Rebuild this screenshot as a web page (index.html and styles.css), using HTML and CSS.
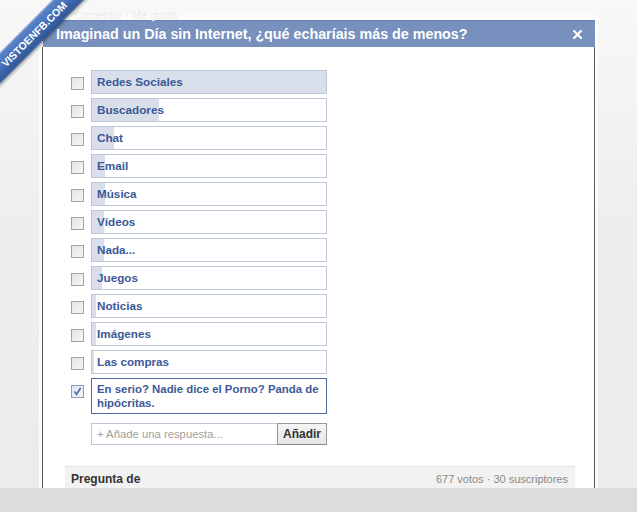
FILE: index.html
```html
<!DOCTYPE html>
<html lang="es">
<head>
<meta charset="utf-8">
<title>Imaginad un Día sin Internet</title>
<link rel="stylesheet" href="styles.css">
</head>
<body>
<div class="stage">
  <div class="ghost">Comentar · Me gusta</div>
  <div class="frame">
    <div class="dialog">
      <div class="head">
        <span class="title">Imaginad un Día sin Internet, ¿qué echaríais más de menos?</span>
        <svg class="close" width="9" height="9" viewBox="0 0 9 9"><path d="M1 1L8 8M8 1L1 8" stroke="#fff" stroke-width="2.2" stroke-linecap="square"/></svg>
      </div>
      <div class="body">
        <div class="options">
          <div class="row"><span class="cb"></span><div class="opt"><div class="bar" style="width:100%"></div><span class="lbl">Redes Sociales</span></div></div>
          <div class="row"><span class="cb"></span><div class="opt"><div class="bar" style="width:67px"></div><span class="lbl">Buscadores</span></div></div>
          <div class="row"><span class="cb"></span><div class="opt"><div class="bar" style="width:22px"></div><span class="lbl">Chat</span></div></div>
          <div class="row"><span class="cb"></span><div class="opt"><div class="bar" style="width:13px"></div><span class="lbl">Email</span></div></div>
          <div class="row"><span class="cb"></span><div class="opt"><div class="bar" style="width:13px"></div><span class="lbl">Música</span></div></div>
          <div class="row"><span class="cb"></span><div class="opt"><div class="bar" style="width:12px"></div><span class="lbl">Vídeos</span></div></div>
          <div class="row"><span class="cb"></span><div class="opt"><div class="bar" style="width:12px"></div><span class="lbl">Nada...</span></div></div>
          <div class="row"><span class="cb"></span><div class="opt"><div class="bar" style="width:10px"></div><span class="lbl">Juegos</span></div></div>
          <div class="row"><span class="cb"></span><div class="opt"><div class="bar" style="width:4px"></div><span class="lbl">Noticias</span></div></div>
          <div class="row"><span class="cb"></span><div class="opt"><div class="bar" style="width:4px"></div><span class="lbl">Imágenes</span></div></div>
          <div class="row"><span class="cb"></span><div class="opt"><div class="bar" style="width:2px"></div><span class="lbl">Las compras</span></div></div>
          <div class="row"><span class="cb checked"><svg width="11" height="11" viewBox="0 0 11 11"><path d="M2.5 5.5L4.6 8.3L8.6 2" fill="none" stroke="#4f6aa3" stroke-width="1.6"/></svg></span><div class="opt sel"><span class="lbl">En serio? Nadie dice el Porno? Panda de hipócritas.</span></div></div>
        </div>
        <div class="add">
          <div class="field">+ Añade una respuesta...</div>
          <div class="btn">Añadir</div>
        </div>
        <div class="foot">
          <span class="by">Pregunta de</span>
          <span class="stats">677 votos · 30 suscriptores</span>
        </div>
      </div>
    </div>
  </div>
  <div class="ribbon"><span class="rtext">VISTOENFB.COM</span></div>
</div>
<div class="band"></div>
</body>
</html>
```

FILE: styles.css
```css
html, body {
  margin: 0;
  padding: 0;
}
body {
  width: 637px;
  height: 512px;
  overflow: hidden;
  font-family: "Liberation Sans", Arial, sans-serif;
  background: #dcdcdc;
}
.stage {
  position: relative;
  height: 488px;
  overflow: hidden;
  padding-top: 15px;
  box-sizing: border-box;
  background: linear-gradient(to bottom, #f8f8f8 0%, #eeeeee 45%, #ececec 100%);
}
.ghost {
  position: absolute;
  left: 74px;
  top: 9px;
  font-size: 11px;
  color: #ebebeb;
}
.frame {
  margin-left: 39px;
  width: 559px;
  box-sizing: border-box;
  padding: 5px 3px 0 3px;
  background: rgba(255, 255, 255, 0.75);
  height: 500px;
}
.dialog {
  height: 100%;
  display: flex;
  flex-direction: column;
}
.head {
  height: 27px;
  box-sizing: border-box;
  background: #7790bd;
  border-top: 1px solid #6880b0;
  display: flex;
  align-items: center;
  justify-content: space-between;
  padding: 0 13px 0 13px;
  margin-left: 1px;
}
.title {
  color: #fff;
  font-weight: bold;
  font-size: 14.3px;
  white-space: nowrap;
}
.close {
  display: block;
}
.body {
  flex: 1;
  background: #fff;
  border-left: 1px solid #5a5a5a;
  border-right: 1px solid #5a5a5a;
  padding: 23px 19px 0 22px;
}
.options {
  display: flex;
  flex-direction: column;
  gap: 4px;
  padding-left: 6px;
}
.row {
  display: flex;
  align-items: flex-start;
  gap: 7px;
}
.cb {
  width: 13px;
  height: 13px;
  box-sizing: border-box;
  margin-top: 7px;
  border: 1px solid #a3a3a3;
  background: linear-gradient(135deg, #e4e4e4 0%, #f6f6f6 100%);
  display: flex;
  align-items: center;
  justify-content: center;
  flex: none;
}
.cb.checked {
  border-color: #8e9bb5;
  background: linear-gradient(135deg, #dfe4ee 0%, #f4f6fa 100%);
}
.opt {
  position: relative;
  width: 236px;
  height: 24px;
  box-sizing: border-box;
  border: 1px solid #bdc7d8;
  background: #fff;
  overflow: hidden;
}
.bar {
  position: absolute;
  left: 0;
  top: 0;
  bottom: 0;
  background: #d8dfea;
}
.lbl {
  position: relative;
  display: block;
  padding-left: 5px;
  line-height: 22px;
  font-size: 11.7px;
  font-weight: bold;
  color: #3b5998;
  white-space: nowrap;
}
.opt.sel {
  height: 36px;
  border-color: #4d68a2;
  padding: 3px 0;
}
.opt.sel .lbl {
  font-size: 11.4px;
  line-height: 14px;
  white-space: normal;
  padding-right: 0;
}
.add {
  display: flex;
  margin: 9px 0 0 26px;
  height: 22px;
}
.field {
  width: 186px;
  box-sizing: border-box;
  border: 1px solid #bdc7d8;
  border-right: none;
  font-size: 11.3px;
  color: #a0a0a0;
  line-height: 20px;
  padding-left: 5px;
}
.btn {
  width: 50px;
  box-sizing: border-box;
  border: 1px solid #999;
  border-bottom-color: #888;
  background: linear-gradient(to bottom, #f5f5f5, #e6e6e6);
  font-size: 12px;
  font-weight: bold;
  color: #333;
  text-align: center;
  line-height: 20px;
}
.foot {
  margin-top: 21px;
  height: 24px;
  box-sizing: border-box;
  background: #f2f2f2;
  border-top: 1px solid #e6e6e6;
  display: flex;
  justify-content: space-between;
  align-items: center;
  padding: 0 7px 0 6px;
}
.by {
  font-size: 12px;
  font-weight: bold;
  color: #333;
}
.stats {
  font-size: 11px;
  color: #8a8a8a;
}
.ribbon {
  position: absolute;
  left: -36px;
  top: 23px;
  width: 140px;
  height: 22px;
  box-sizing: border-box;
  transform: rotate(-45deg);
  background: linear-gradient(to bottom, #5c84c8 0%, #4470b7 50%, #2e5698 100%);
  border-top: 1px solid #7598d4;
  border-bottom: 1px solid #21437f;
  box-shadow: 0 2px 3px rgba(0, 0, 0, 0.3);
  display: flex;
  align-items: center;
  justify-content: center;
}
.rtext {
  color: #fff;
  font-size: 10.5px;
  font-weight: bold;
  line-height: 12px;
  white-space: nowrap;
}
.band {
  height: 24px;
  background: #dcdcdc;
}
```
